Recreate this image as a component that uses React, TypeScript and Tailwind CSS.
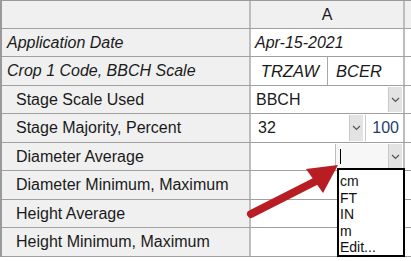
const rows = [
  { label: "Application Date", italic: true, h: "h-[28px]" },
  { label: "Crop 1 Code, BBCH Scale", italic: true, h: "h-[29px]" },
  { label: "Stage Scale Used", italic: false, h: "h-[28px]" },
  { label: "Stage Majority, Percent", italic: false, h: "h-[29px]" },
  { label: "Diameter Average", italic: false, h: "h-[28px]" },
  { label: "Diameter Minimum, Maximum", italic: false, h: "h-[29px]" },
  { label: "Height Average", italic: false, h: "h-[28px]" },
  { label: "Height Minimum, Maximum", italic: false, h: "h-[29px]" },
]

function Chevron() {
  return (
    <svg width="9" height="6" viewBox="0 0 9 6" className="text-[#555]">
      <path d="M1 1 L4.5 4.5 L8 1" fill="none" stroke="currentColor" strokeWidth="1.2" />
    </svg>
  )
}

function DropButton() {
  return (
    <div className="flex h-full w-[14px] shrink-0 items-center justify-center border-l border-[#c8c8c8] bg-[#e3e3e3]">
      <Chevron />
    </div>
  )
}

function Cell({ index }: { index: number }) {
  if (index === 0)
    return <div className="flex h-full items-center pl-[4px] italic">Apr-15-2021</div>
  if (index === 1)
    return (
      <div className="flex h-full items-center text-[16.5px] italic">
        <div className="flex h-full w-[77px] items-center justify-center border-r border-[#a8a8a8] pl-[2px]">TRZAW</div>
        <div className="flex h-full items-center pl-[8px]">BCER</div>
      </div>
    )
  if (index === 2)
    return (
      <div className="flex h-full items-stretch py-px pr-px">
        <div className="flex flex-1 items-center pl-[5px]">BBCH</div>
        <DropButton />
      </div>
    )
  if (index === 3)
    return (
      <div className="flex h-full items-stretch py-px pr-px">
        <div className="flex w-[98px] items-center pl-[7px]">32</div>
        <DropButton />
        <div className="ml-[2px] flex flex-1 items-center justify-end border-l border-[#c8c8c8] pr-[3px] text-[#1d3f6e]">100</div>
      </div>
    )
  if (index === 4)
    return (
      <div className="flex h-full items-stretch py-px pr-px">
        <div className="w-[85px] border-r border-[#bdbdbd]" />
        <div className="flex flex-1 items-center bg-[#f7f7f7] pl-[4px]">
          <div className="h-[15px] w-px bg-black" />
        </div>
        <DropButton />
      </div>
    )
  return null
}

export default function App() {
  return (
    <div className="relative h-[261px] w-[411px] overflow-hidden bg-white text-[16px] text-[#1a1a1a]" style={{ fontFamily: '"Liberation Sans", Arial, sans-serif' }}>
      <div className="flex flex-col border-l-2 border-t border-[#9a9a9a]">
        <div className="flex h-[28px] border-b border-[#a0a0a0] bg-[#f0f0f0]">
          <div className="w-[249px] border-r-2 border-[#bdbdbd]" />
          <div className="flex w-[154px] items-center justify-center border-r-2 border-[#bdbdbd]">A</div>
          <div className="flex-1" />
        </div>
        {rows.map((row, i) => (
          <div key={row.label} className={`flex ${row.h} border-b border-[#a0a0a0]`}>
            <div className={`flex w-[249px] items-center overflow-hidden whitespace-nowrap border-r-2 border-[#bdbdbd] bg-[#f0f0f0] ${row.italic ? "pl-[5px] italic" : "pl-[14px]"}`}>
              {row.label}
            </div>
            <div className="w-[154px] border-r-2 border-[#bdbdbd] bg-white">
              <Cell index={i} />
            </div>
            <div className="flex-1 bg-white" />
          </div>
        ))}
      </div>

      <div className="absolute left-[337px] top-[168px] flex h-[89px] w-[68px] flex-col overflow-hidden border-2 border-black bg-white pt-[3px] text-[14px] leading-[16.6px] text-[#111]">
        <span className="pl-[1px]">cm</span>
        <span className="pl-[1px]">FT</span>
        <span className="pl-[1px]">IN</span>
        <span className="pl-[1px]">m</span>
        <span className="pl-[1px]">Edit...</span>
      </div>

      <svg className="absolute left-0 top-0" width="411" height="261" viewBox="0 0 411 261">
        <line x1="251" y1="214" x2="318" y2="180" stroke="#b81d24" strokeWidth="8" strokeLinecap="round" />
        <polygon points="338,165 306,169 323,193" fill="#b81d24" />
      </svg>
    </div>
  )
}
